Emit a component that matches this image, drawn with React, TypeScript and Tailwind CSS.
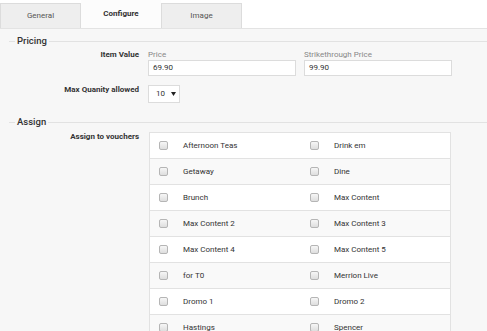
import React from 'react';

const VOUCHERS: [string, string][] = [
  ['Afternoon Teas', 'Drink em'],
  ['Getaway', 'Dine'],
  ['Brunch', 'Max Content'],
  ['Max Content 2', 'Max Content 3'],
  ['Max Content 4', 'Max Content 5'],
  ['for T0', 'Merrion Live'],
  ['Dromo 1', 'Dromo 2'],
  ['Hastings', 'Spencer'],
  ['Sample', 'Test'],
];

function Legend({ title }: { title: string }) {
  return (
    <div className="flex items-center h-[12px] pl-[9px]">
      <div className="w-[6px] h-px bg-[#e2e2e2]" />
      <span className="px-[2px] text-[9.5px] leading-[12px] font-medium text-[#333]">{title}</span>
      <div className="flex-1 h-px bg-[#e2e2e2]" />
    </div>
  );
}

function Checkbox() {
  return (
    <span className="block w-[9px] h-[9px] rounded-[2px] border border-[#b5b5b5] bg-gradient-to-b from-[#f6f6f6] to-[#dedede] shrink-0" />
  );
}

export default function App() {
  return (
    <div className="w-[487px] h-[331px] overflow-hidden bg-white text-[#333]" style={{ fontFamily: 'Roboto, "Liberation Sans", sans-serif' }}>
      {/* Tabs */}
      <div className="flex h-[28px] items-start">
        <div className="mt-[3px] w-[81px] h-[25px] flex items-center justify-center bg-[#eeeeee] border border-[#dcdcdc] border-b-0 text-[8px] text-[#555]">
          General
        </div>
        <div className="w-[80px] h-[28px] flex items-center justify-center bg-[#fcfcfc] text-[8px] font-bold text-[#333]">
          Configure
        </div>
        <div className="mt-[3px] w-[81px] h-[25px] flex items-center justify-center bg-[#eeeeee] border border-[#dcdcdc] border-b-0 text-[8px] text-[#555]">
          Image
        </div>
      </div>

      {/* Content */}
      <div className="bg-[#f7f7f7] border-t border-[#e3e3e3] pt-[6px] h-[303px]">
        <Legend title="Pricing" />

        <div className="grid grid-cols-[139px_1fr] gap-x-[9px] mt-[3px]">
          <div className="text-right text-[8px] font-bold leading-[10px] text-[#333]">Item Value</div>
          <div className="flex gap-[8px]">
            <div className="w-[148px]">
              <div className="text-[8px] leading-[10px] text-[#888]">Price</div>
              <div className="h-[16px] bg-white border border-[#dcdcdc] pl-[4px] flex items-center text-[8px] text-[#333]">69.90</div>
            </div>
            <div className="w-[148px]">
              <div className="text-[8px] leading-[10px] text-[#888]">Strikethrough Price</div>
              <div className="h-[16px] bg-white border border-[#dcdcdc] pl-[4px] flex items-center text-[8px] text-[#333]">99.90</div>
            </div>
          </div>

          <div className="mt-[9px] text-right text-[8px] font-bold leading-[10px] text-[#333]">Max Quanity allowed</div>
          <div className="mt-[9px]">
            <div className="w-[32px] h-[18px] bg-white border border-[#dcdcdc] flex items-center pl-[7px] gap-[6px] text-[8px] text-[#333]">
              <span>10</span>
              <svg width="5" height="4" viewBox="0 0 5 4"><path d="M0 0h5L2.5 4z" fill="#222" /></svg>
            </div>
          </div>
        </div>

        <div className="mt-[13px]">
          <Legend title="Assign" />
        </div>

        <div className="grid grid-cols-[139px_1fr] gap-x-[10px] mt-[4px]">
          <div className="text-right text-[8px] font-bold leading-[10px] text-[#333]">Assign to vouchers</div>
          <div className="w-[302px] border-x border-[#e2e2e2]">
            {VOUCHERS.map(([a, b], i) => (
              <div
                key={a}
                className={`grid grid-cols-[152px_1fr] h-[26px] border-t border-[#e2e2e2] ${i % 2 === 1 ? 'bg-[#f9f9f9]' : 'bg-white'}`}
              >
                <div className="flex items-center pl-[9px] gap-[15px] text-[8px] text-[#333]">
                  <Checkbox />
                  <span>{a}</span>
                </div>
                <div className="flex items-center pl-[8px] gap-[15px] text-[8px] text-[#333]">
                  <Checkbox />
                  <span>{b}</span>
                </div>
              </div>
            ))}
          </div>
        </div>
      </div>
    </div>
  );
}
